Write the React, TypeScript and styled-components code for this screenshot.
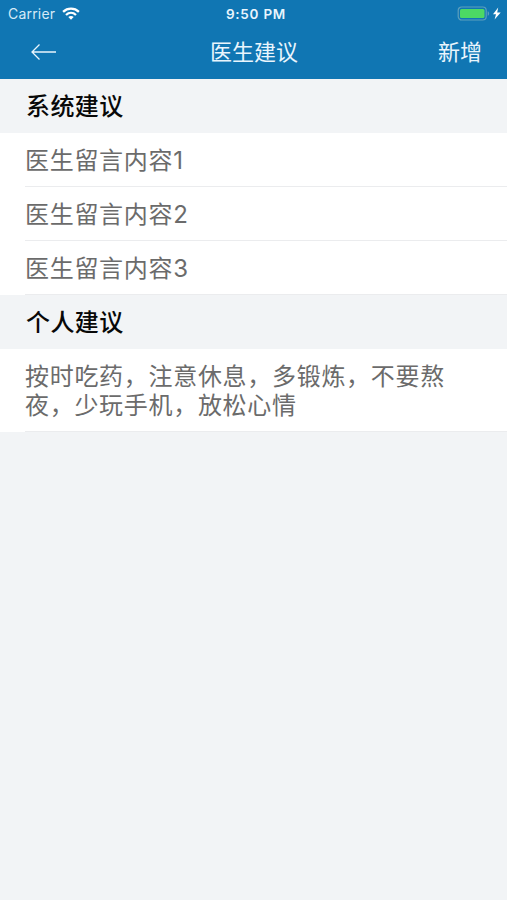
import React from 'react';
import styled, { createGlobalStyle } from 'styled-components';

const Global = createGlobalStyle`
  * { box-sizing: border-box; }
  html, body { margin: 0; background: #f2f4f6; }
  body { font-family: Inter, "Noto Sans CJK SC", sans-serif; }
`;

const Screen = styled.main`
  width: 100%;
  min-height: 900px;
  background: #f2f4f6;
`;

const Header = styled.header`
  height: 79px;
  color: #e9f5fd;
  background: #1076b3;
`;

const StatusBar = styled.div`
  display: grid;
  grid-template-columns: 1fr auto 1fr;
  align-items: center;
  height: 27px;
  padding: 0 5px 0 8px;
`;

const Carrier = styled.div`
  display: flex;
  align-items: center;
  gap: 7px;
  font-size: 14px;
  letter-spacing: 0.2px;
  color: #d5eaf7;
`;

const Clock = styled.div`
  padding-left: 2px;
  font-size: 13.5px;
  font-weight: 600;
  letter-spacing: 0.75px;
`;

const Power = styled.div`
  display: flex;
  justify-content: flex-end;
`;

const NavBar = styled.nav`
  display: grid;
  grid-template-columns: 1fr auto 1fr;
  align-items: center;
  height: 50px;
  padding: 0 26px 0 30px;
`;

const BackButton = styled.button`
  display: flex;
  justify-self: start;
  padding: 0;
  border: 0;
  color: inherit;
  background: none;
`;

const Title = styled.h1`
  margin: 0 3px 0 0;
  font-size: 22px;
  font-weight: 400;
  line-height: 32px;
`;

const AddButton = styled.button`
  justify-self: end;
  margin-right: -1px;
  padding: 0;
  border: 0;
  color: inherit;
  background: none;
  font: inherit;
  font-size: 22px;
  line-height: 32px;
`;

const SectionTitle = styled.h2<{ $height: number }>`
  height: ${(p) => p.$height}px;
  margin: 0;
  padding: 1px 0 0 26px;
  color: #080808;
  font-size: 24px;
  font-weight: 500;
  letter-spacing: 0.4px;
  line-height: ${(p) => p.$height}px;
`;

const List = styled.ul`
  margin: 0;
  padding: 0 0 0 25px;
  list-style: none;
  background: #fff;
`;

const Item = styled.li`
  padding: 14px 50px 11px 0;
  border-bottom: 1px solid #ebecee;
  color: #6b6b6b;
  font-size: 24px;
  font-weight: 400;
  letter-spacing: 0.7px;
  line-height: 28px;
`;

const Note = styled(Item)`
  padding: 13px 50px 11px 0;
  line-height: 29px;
`;

const WifiIcon = () => (
  <svg width="18" height="13" viewBox="0 0 18 13" fill="none" stroke="#fff" strokeWidth="2.3">
    <path d="M1.1 4.8C5.6.6 12.4.6 16.9 4.8" />
    <path d="M4 8C7 5.2 11 5.2 14 8" />
    <path d="M9 12.7 6.3 10C7.8 8.6 10.2 8.6 11.7 10Z" fill="#fff" stroke="none" />
  </svg>
);

const BatteryIcon = () => (
  <svg width="45" height="15" viewBox="0 0 45 15">
    <rect x="1.2" y="1" width="28" height="13" rx="3.5" fill="none" stroke="#5c9fbd" strokeWidth="1.2" />
    <rect x="3" y="3" width="24.5" height="9" rx="1.5" fill="#4cd964" />
    <path d="M30.7 5.2C32.6 5.8 32.6 9.2 30.7 9.8Z" fill="#5c9fbd" />
    <path d="M41.2 1.5 36 8.2H39L37.6 13.5 43.7 6.5H40.2Z" fill="#fff" />
  </svg>
);

const ArrowIcon = () => (
  <svg width="28" height="18" viewBox="0 0 28 18" fill="none" stroke="currentColor" strokeWidth="1.3">
    <path d="M26 9H2M9.5 1.5 2 9l7.5 7.5" />
  </svg>
);

const messages = ['医生留言内容1', '医生留言内容2', '医生留言内容3'];

export default function App() {
  return (
    <Screen>
      <Global />
      <Header>
        <StatusBar>
          <Carrier>Carrier <WifiIcon /></Carrier>
          <Clock>9:50 PM</Clock>
          <Power><BatteryIcon /></Power>
        </StatusBar>
        <NavBar>
          <BackButton aria-label="返回"><ArrowIcon /></BackButton>
          <Title>医生建议</Title>
          <AddButton>新增</AddButton>
        </NavBar>
      </Header>
      <SectionTitle $height={54}>系统建议</SectionTitle>
      <List>
        {messages.map((message) => <Item key={message}>{message}</Item>)}
      </List>
      <SectionTitle $height={54}>个人建议</SectionTitle>
      <List>
        <Note>按时吃药，注意休息，多锻炼，不要熬夜，少玩手机，放松心情</Note>
      </List>
    </Screen>
  );
}
